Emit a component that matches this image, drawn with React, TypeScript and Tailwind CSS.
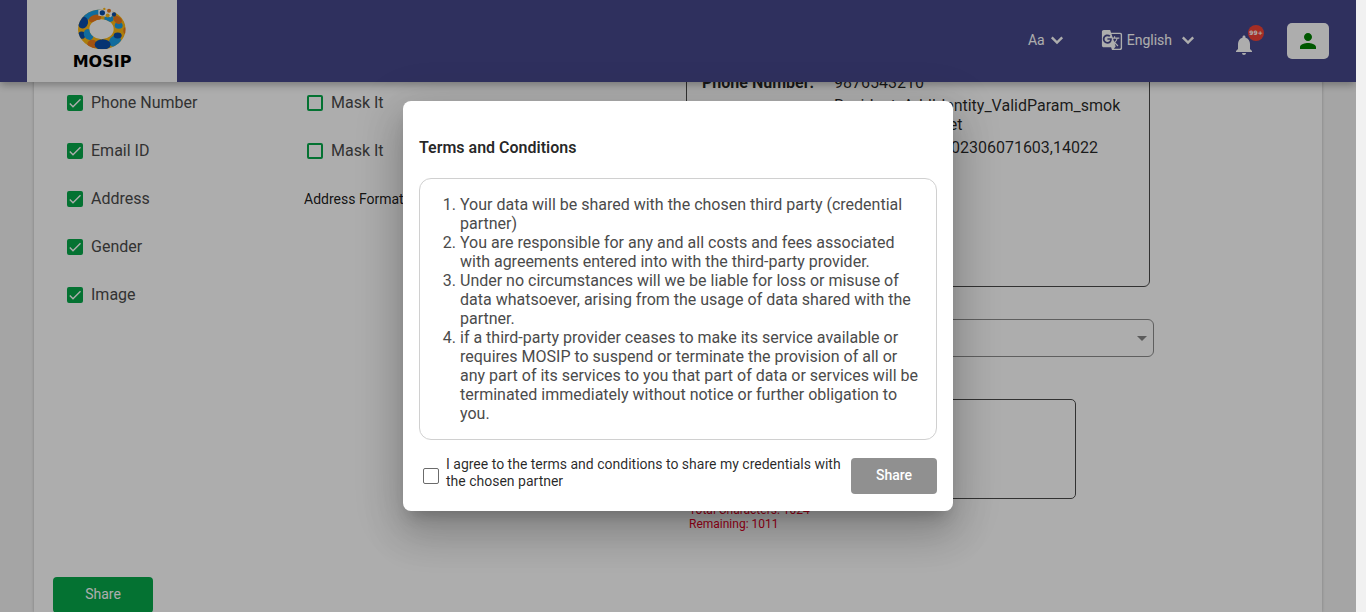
import React from "react";
import { MdArrowDropDown, MdGTranslate, MdNotifications, MdPerson } from "react-icons/md";

const attributes = [
  { label: "Phone Number", maskable: true },
  { label: "Email ID", maskable: true },
  { label: "Address", format: true },
  { label: "Gender" },
  { label: "Image" },
];

const terms = [
  "Your data will be shared with the chosen third party (credential partner)",
  "You are responsible for any and all costs and fees associated with agreements entered into with the third-party provider.",
  "Under no circumstances will we be liable for loss or misuse of data whatsoever, arising from the usage of data shared with the partner.",
  "if a third-party provider ceases to make its service available or requires MOSIP to suspend or terminate the provision of all or any part of its services to you that part of data or services will be terminated immediately without notice or further obligation to you.",
];

function Logo() {
  return (
    <a href="#home" className="flex w-[150px] flex-col items-center bg-white pt-[7px] text-black">
      <svg viewBox="52 22 150 128" className="h-[43px] w-[50px]" aria-hidden="true">
        <defs>
          <clipPath id="ring">
            <path
              clipRule="evenodd"
              d="M55 88a71.500 60 0 1 0 143 0a71.500 60 0 1 0 -143 0ZM89 88a36.500 30 0 1 0 73 0a36.500 30 0 1 0 -73 0Z"
            />
          </clipPath>
        </defs>
        <g clipPath="url(#ring)">
          <rect x="50" y="24" width="152" height="130" fill="#fdb913" />
          <ellipse cx="98" cy="42" rx="28" ry="14" transform="rotate(-25 98 42)" fill="#1a9fe8" />
          <ellipse cx="106" cy="56" rx="19" ry="11" transform="rotate(-15 106 56)" fill="#ee7a1b" />
          <ellipse cx="70" cy="68" rx="15" ry="18" transform="rotate(15 70 68)" fill="#0a4da8" />
          <ellipse cx="66" cy="106" rx="11" ry="11" fill="#0a4da8" />
          <ellipse cx="87" cy="104" rx="14" ry="17" transform="rotate(-30 87 104)" fill="#1a9fe8" />
          <ellipse cx="98" cy="133" rx="15" ry="13" fill="#ee7a1b" />
          <ellipse cx="166" cy="124" rx="19" ry="16" transform="rotate(-35 166 124)" fill="#1a9fe8" />
          <ellipse cx="129" cy="134" rx="24" ry="16" fill="#0a4da8" />
          <ellipse cx="174" cy="107" rx="12" ry="9" fill="#0a4da8" />
          <ellipse cx="177" cy="77" rx="12" ry="10" fill="#1a9fe8" />
          <ellipse cx="148" cy="57" rx="14" ry="10" fill="#1a9fe8" />
          <ellipse cx="174" cy="60" rx="14" ry="10" transform="rotate(40 174 60)" fill="#ee7a1b" />
          <ellipse cx="197" cy="92" rx="6" ry="10" fill="#ee7a1b" />
          <path d="M116 24h54l-16 28-18-2-20-2Z" fill="#fff" />
        </g>
        <circle cx="128" cy="39" r="8" fill="#0a4da8" />
        <circle cx="148" cy="33" r="6" fill="#ee7a1b" />
        <circle cx="134" cy="27" r="3.500" fill="#fdb913" />
        <circle cx="163" cy="44" r="6.500" fill="#0a4da8" />
        <circle cx="144" cy="47" r="6" fill="#fdb913" />
      </svg>
      <span className="mt-[2px] font-['DejaVu_Sans'] text-base leading-5 font-bold">MOSIP</span>
    </a>
  );
}

function Chevron() {
  return (
    <svg viewBox="0 0 24 24" className="h-6 w-6" aria-hidden="true">
      <path d="m6.800 9.300 5.200 5.200 5.200-5.200" fill="none" stroke="currentColor" strokeWidth="2.400" />
    </svg>
  );
}

function Header() {
  return (
    <header className="relative z-10 flex h-[82px] shrink-0 bg-[#46478b] pl-[27px] text-sm text-white shadow-[0_3px_8px_rgba(0,0,0,0.3)]">
      <Logo />
      <nav className="ml-auto flex items-center pr-[27px]">
        <button className="flex items-center pb-[2px]">
          Aa
          <Chevron />
        </button>
        <button className="ml-8 flex items-center gap-1 pb-[2px]">
          <MdGTranslate size={22} />
          English
          <Chevron />
        </button>
        <button aria-label="Notifications" className="relative ml-8 pt-2">
          <MdNotifications size={24} />
          <span className="absolute top-0 left-4 flex h-4 w-4 items-center justify-center rounded-full bg-[#f44336] font-['DejaVu_Sans'] text-[6px] font-bold">
            99+
          </span>
        </button>
        <button
          aria-label="Profile"
          className="ml-[31px] flex h-9 w-[42px] items-center justify-center rounded-[5px] bg-white text-[#008000]"
        >
          <MdPerson size={24} />
        </button>
      </nav>
    </header>
  );
}

function GreenCheckbox({ id, checked }: { id: string; checked?: boolean }) {
  return (
    <span className="grid h-4 w-4 place-items-center">
      <input
        id={id}
        type="checkbox"
        defaultChecked={checked}
        className="col-start-1 row-start-1 h-4 w-4 appearance-none rounded-[2px] border-2 border-[#06a94b] checked:bg-[#06a94b]"
      />
      {checked && (
        <svg viewBox="0 0 16 16" className="pointer-events-none col-start-1 row-start-1 h-4 w-4" aria-hidden="true">
          <path d="M2.800 8.600 6 11.800 13.500 4.200" fill="none" stroke="#fff" strokeWidth="1.400" />
        </svg>
      )}
    </span>
  );
}

function AttributeList() {
  return (
    <div className="w-[652px] shrink-0 pl-[33px] text-base text-[#4b4b4b]">
      {attributes.map((item) => (
        <div key={item.label} className="flex h-12 items-center">
          <div className="flex w-60 items-center gap-2">
            <GreenCheckbox id={item.label} checked />
            <label htmlFor={item.label}>{item.label}</label>
          </div>
          {item.maskable && (
            <div className="flex items-center gap-2">
              <GreenCheckbox id={`${item.label}-mask`} />
              <label htmlFor={`${item.label}-mask`}>Mask It</label>
            </div>
          )}
          {item.format && <span className="-ml-[3px] text-sm text-black/90">Address Format</span>}
        </div>
      ))}
      <button className="mt-[258px] -ml-[14px] h-9 w-[100px] rounded bg-[#06a94b] pb-[2px] text-sm text-white">
        Share
      </button>
    </div>
  );
}

function Preview() {
  return (
    <div className="w-[468px]">
      <dl className="-mt-[9px] mr-1 grid h-[217px] grid-cols-[132px_1fr] content-start items-center gap-y-1 rounded-md border border-[#4b4b4b] pt-[2px] pr-6 pl-[15px] text-base leading-[19px] text-black/85">
        <dt className="font-bold">Phone Number:</dt>
        <dd>9876543210</dd>
        <dt className="font-bold">Email ID:</dt>
        <dd>
          Resident_AddIdentity_ValidParam_smok
          <br />
          e_Pos@mosip.net
        </dd>
        <dt className="font-bold">Address:</dt>
        <dd>TEST_ADDRES,202306071603,14022</dd>
      </dl>
      <div className="mt-8 grid items-center">
        <select
          aria-label="Sharing partner"
          className="col-start-1 row-start-1 h-[38px] w-full appearance-none rounded-md border border-[#8c8c8c] px-3"
        >
          <option>Partner</option>
        </select>
        <MdArrowDropDown
          size={24}
          className="pointer-events-none col-start-1 row-start-1 justify-self-end text-[#868686]"
          aria-hidden="true"
        />
      </div>
      <textarea
        aria-label="Purpose"
        className="mt-[42px] block h-[100px] w-[390px] resize-none rounded-[5px] border border-[#4b4b4b] p-3"
      />
      <p className="mt-1 pl-[3px] text-xs leading-[14px] text-[#e60026]">
        Total Characters: 1024
        <br />
        Remaining: 1011
      </p>
    </div>
  );
}

function TermsDialog() {
  return (
    <div className="absolute inset-0 z-20 flex items-center justify-center bg-black/32">
      <section
        role="dialog"
        aria-labelledby="terms-title"
        className="w-[550px] rounded-lg bg-white px-4 pt-[37px] pb-[17px] shadow-[0_11px_15px_-7px_rgba(0,0,0,0.2),0_24px_38px_3px_rgba(0,0,0,0.14),0_9px_46px_8px_rgba(0,0,0,0.12)]"
      >
        <h2 id="terms-title" className="text-base leading-5 font-semibold text-black/85">
          Terms and Conditions
        </h2>
        <ol className="mt-5 list-decimal rounded-xl border border-[#d0d0d0] py-4 pr-4 pl-10 text-base leading-[19px] text-[#4b4b4b]">
          {terms.map((term) => (
            <li key={term}>{term}</li>
          ))}
        </ol>
        <div className="mt-[18px] flex items-start">
          <input
            id="agree"
            type="checkbox"
            className="mt-[10px] ml-1 h-4 w-4 shrink-0 appearance-none rounded-[2px] border border-[#6b6b6b]"
          />
          <label htmlFor="agree" className="-mt-[2px] ml-[7px] flex-1 text-sm leading-[17px] text-black/85">
            I agree to the terms and conditions to share my credentials with the chosen partner
          </label>
          <button className="h-9 w-[86px] shrink-0 rounded bg-[#909090] pb-[2px] text-sm font-medium text-white">
            Share
          </button>
        </div>
      </section>
    </div>
  );
}

export default function App() {
  return (
    <div className="flex h-screen overflow-hidden bg-[#f1f1f1] font-[Roboto,sans-serif]">
      <div className="relative flex min-w-0 flex-1 flex-col overflow-hidden bg-[#f4f4f4]">
        <Header />
        <main className="mx-[34px] -mt-[3px] flex min-h-0 flex-1 bg-white shadow-[0_0_3px_rgba(0,0,0,0.25)]">
          <AttributeList />
          <Preview />
        </main>
        <TermsDialog />
      </div>
      <div className="w-[10px] shrink-0" />
    </div>
  );
}
